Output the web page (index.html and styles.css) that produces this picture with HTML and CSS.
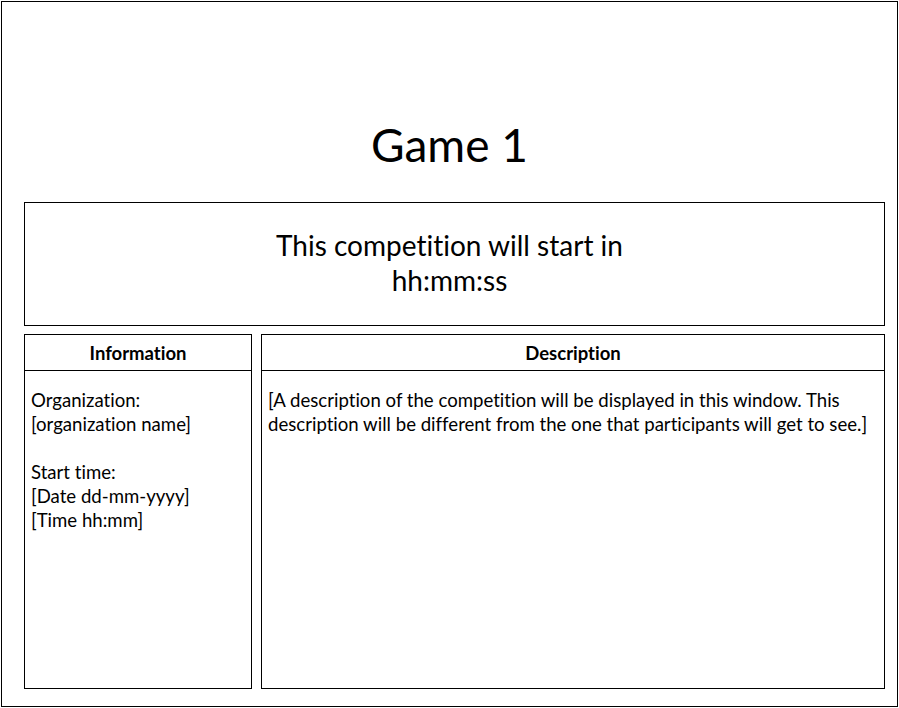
FILE: index.html
```html
<!DOCTYPE html>
<html lang="en">
<head>
<meta charset="utf-8">
<title>Game 1</title>
<link rel="stylesheet" href="styles.css">
</head>
<body>
<div class="frame">
  <div class="title-area">
    <h1 class="title">Game 1</h1>
  </div>
  <div class="countdown">
    <p class="countdown-text">This competition will start in<br>hh:mm:ss</p>
  </div>
  <div class="panels">
    <section class="panel panel-info">
      <div class="panel-header">Information</div>
      <div class="panel-body">
        <p>Organization:<br>[organization name]</p>
        <p>Start time:<br>[Date dd-mm-yyyy]<br>[Time hh:mm]</p>
      </div>
    </section>
    <section class="panel panel-desc">
      <div class="panel-header">Description</div>
      <div class="panel-body">
        <p>[A description of the competition will be displayed in this window. This description will be different from the one that participants will get to see.]</p>
      </div>
    </section>
  </div>
</div>
</body>
</html>
```
FILE: styles.css
```css
* { box-sizing: border-box; }
html, body { margin: 0; padding: 0; background: #fff; }
body {
  font-family: Lato, "Open Sans", sans-serif;
  font-variant-ligatures: none;
  color: #000;
}
.frame {
  margin: 1px 0 0 1px;
  width: 897px;
  height: 706px;
  border: 1px solid #000;
  padding: 0 12px 17px 22px;
  display: flex;
  flex-direction: column;
}
.title-area {
  height: 200px;
  margin: 0 -12px 0 -22px;
  padding-top: 120px;
  display: flex;
  align-items: flex-start;
  justify-content: center;
}
.title {
  margin: 0;
  font-weight: 400;
  font-size: 46px;
  line-height: 1;
}
.countdown {
  height: 124px;
  border: 1px solid #000;
  padding-right: 10px;
  display: flex;
  align-items: center;
  justify-content: center;
}
.countdown-text {
  margin: 0;
  text-align: center;
  font-size: 28px;
  line-height: 35px;
  position: relative;
  top: -1px;
}
.panels {
  margin-top: 8px;
  height: 355px;
  display: flex;
  gap: 9px;
}
.panel {
  border: 1px solid #000;
  display: flex;
  flex-direction: column;
}
.panel-info { width: 228px; }
.panel-desc { flex: 1; }
.panel-header {
  height: 36px;
  border-bottom: 1px solid #000;
  display: flex;
  align-items: center;
  justify-content: center;
  font-weight: 700;
  font-size: 18.5px;
}
.panel-body {
  padding: 17px 6px 0 6px;
  font-size: 18.6px;
  line-height: 24px;
}
.panel-body p { margin: 0 0 24px 0; }
```
